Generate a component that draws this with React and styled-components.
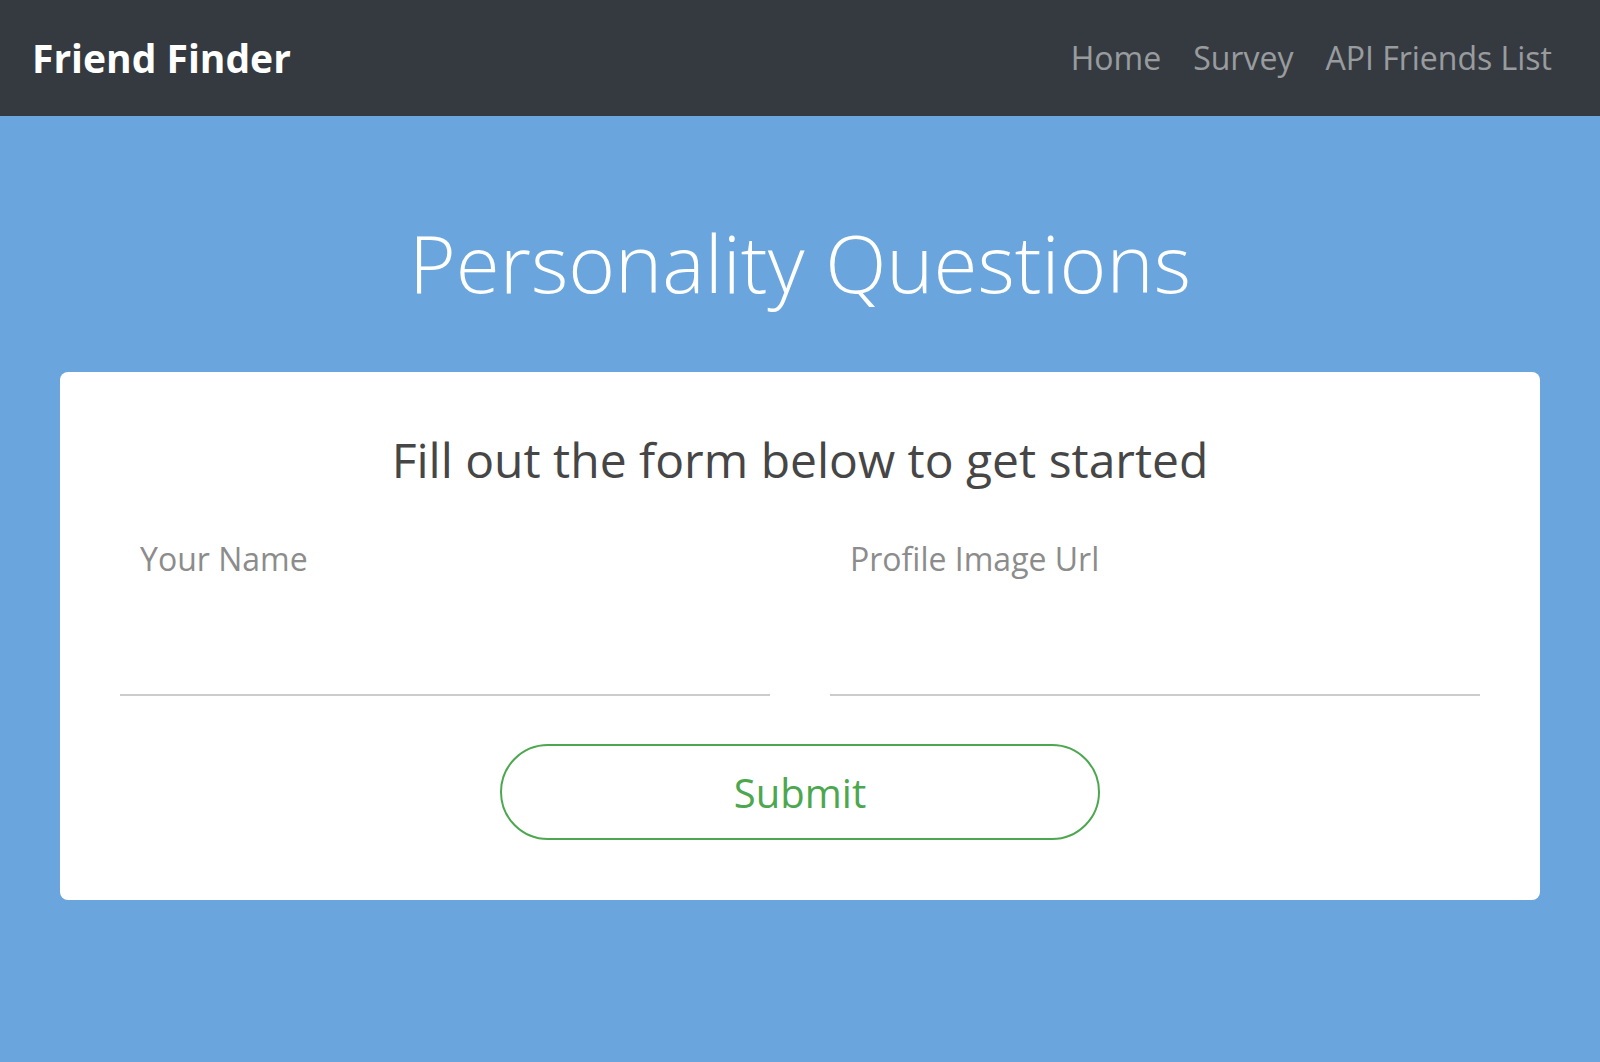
import styled, { createGlobalStyle } from "styled-components";

const GlobalStyle = createGlobalStyle`
  html, body {
    margin: 0;
    padding: 0;
  }
  body {
    font-family: "Open Sans", "Noto Sans", sans-serif;
    background-color: #6aa6dd;
  }
  * {
    box-sizing: border-box;
  }
`;

const Page = styled.div`
  width: 100%;
  min-height: 1062px;
  background-color: #6aa6dd;
`;

const Navbar = styled.nav`
  height: 116px;
  padding: 0 32px;
  background-color: #343a40;
  display: flex;
  align-items: center;
  justify-content: space-between;
`;

const Brand = styled.a`
  color: #fff;
  font-size: 39px;
  font-weight: 700;
  line-height: 60px;
  text-decoration: none;
`;

const NavLinks = styled.ul`
  display: flex;
  list-style: none;
  margin: 0;
  padding: 0;
`;

const NavLink = styled.a`
  display: block;
  padding: 0 16px;
  color: rgba(255, 255, 255, 0.5);
  font-size: 32px;
  line-height: 48px;
  text-decoration: none;
`;

const Main = styled.main`
  padding: 98px 60px 0;
`;

const Title = styled.h1`
  margin: 0 0 62px;
  color: #fff;
  font-size: 80px;
  font-weight: 300;
  line-height: 96px;
  text-align: center;
`;

const Card = styled.form`
  background-color: #fff;
  border-radius: 8px;
  padding: 58px 60px 60px;
`;

const CardTitle = styled.h3`
  margin: 0 0 49px;
  color: #464646;
  font-size: 48px;
  font-weight: 400;
  line-height: 60px;
  text-align: center;
`;

const FieldRow = styled.div`
  display: grid;
  grid-template-columns: 1fr 1fr;
  gap: 60px;
`;

const Field = styled.label`
  display: flex;
  flex-direction: column;
`;

const Label = styled.span`
  padding-left: 20px;
  color: #8c8c8c;
  font-size: 32px;
  line-height: 40px;
`;

const Input = styled.input`
  height: 117px;
  border: none;
  border-bottom: 2px solid #cccccc;
  padding: 0 20px;
  font-family: inherit;
  font-size: 32px;
  outline: none;
  background: transparent;
`;

const SubmitButton = styled.button`
  display: flex;
  align-items: center;
  justify-content: center;
  width: 600px;
  height: 96px;
  margin: 48px auto 0;
  padding: 2px 0 0;
  border: 2px solid #4ca74f;
  border-radius: 48px;
  background: #fff;
  color: #4ca74f;
  font-family: inherit;
  font-size: 40px;
  line-height: 48px;
  cursor: pointer;
`;

export default function App() {
  return (
    <Page>
      <GlobalStyle />
      <Navbar>
        <Brand href="#">Friend Finder</Brand>
        <NavLinks>
          <li>
            <NavLink href="#">Home</NavLink>
          </li>
          <li>
            <NavLink href="#">Survey</NavLink>
          </li>
          <li>
            <NavLink href="#">API Friends List</NavLink>
          </li>
        </NavLinks>
      </Navbar>

      <Main>
        <Title>Personality Questions</Title>
        <Card onSubmit={(e) => e.preventDefault()}>
          <CardTitle>Fill out the form below to get started</CardTitle>
          <FieldRow>
            <Field>
              <Label>Your Name</Label>
              <Input type="text" />
            </Field>
            <Field>
              <Label>Profile Image Url</Label>
              <Input type="text" />
            </Field>
          </FieldRow>
          <SubmitButton type="submit">Submit</SubmitButton>
        </Card>
      </Main>
    </Page>
  );
}
